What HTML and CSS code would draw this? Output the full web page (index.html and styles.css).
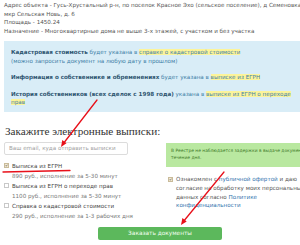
FILE: index.html
```html
<!DOCTYPE html>
<html lang="ru">
<head>
<meta charset="utf-8">
<link rel="stylesheet" href="styles.css">
</head>
<body>
<div class="page">
  <div class="info">
    <div class="line">Адрес объекта - Гусь-Хрустальный р-н, по поселок Красное Эхо (сельское поселение), д Семеновка</div>
    <div class="line">мкр Сельская Новь, д. 6</div>
    <div class="line">Площадь - 1450.24</div>
    <div class="line">Назначение - Многоквартирные дома не выше 3-х этажей, с участком и без участка</div>
  </div>

  <div class="callout">
    <p><b>Кадастровая стоимость</b> будет указана в <mark>справке о кадастровой стоимости</mark><br>(можно запросить документ на любую дату в прошлом)</p>
    <p><b>Информация о собственнике и обременениях</b> будет указана в <mark>выписке из ЕГРН</mark></p>
    <p><b>История собственников (всех сделок с 1998 года)</b> указана в <mark>выписке из ЕГРН о переходе</mark><br><mark>прав</mark></p>
  </div>

  <h2 class="title">Закажите электронные выписки:</h2>

  <div class="order">
    <div class="left">
      <div class="email">Ваш email, куда отправить выписки</div>
      <ul class="docs">
        <li class="doc"><span class="box checked"><svg viewBox="0 0 6 6" width="6" height="6"><path d="M1.2 3.1 L2.5 4.4 L4.9 1.4" fill="none" stroke="#333" stroke-width="1.1"/></svg></span>Выписка из ЕГРН</li>
        <li class="price">890 руб., исполнение за 5-30 минут</li>
        <li class="doc"><span class="box"></span>Выписка из ЕГРН о переходе прав</li>
        <li class="price">1100 руб., исполнение за 5-30 минут</li>
        <li class="doc"><span class="box"></span>Справка о кадастровой стоимости</li>
        <li class="price">290 руб., исполнение за 1-3 рабочих дня</li>
      </ul>
    </div>
    <div class="right">
      <div class="alert">В Реестре не наблюдается задержки в выдаче документов. Выписки готовятся в<br>течение дня.</div>
      <div class="consent">
        <span class="box checked"><svg viewBox="0 0 6 6" width="6" height="6"><path d="M1.2 3.1 L2.5 4.4 L4.9 1.4" fill="none" stroke="#333" stroke-width="1.1"/></svg></span>
        <div class="consent-text">Ознакомлен с <a href="#">публичной офертой</a> и даю<br>согласие на обработку моих персональных<br>данных согласно <a href="#">Политике</a><br><a href="#">конфиденциальности</a></div>
      </div>
    </div>
  </div>

  <div class="actions">
    <button class="submit">Заказать документы</button>
  </div>

  <svg class="marks" width="300" height="245" viewBox="0 0 300 245">
    <g stroke="#e8101a" stroke-width="1.3" fill="none" stroke-linecap="round">
      <line x1="97" y1="100" x2="63" y2="144"/>
      <line x1="3" y1="172" x2="70" y2="170.5"/>
      <line x1="224" y1="172" x2="183" y2="222"/>
    </g>
    <g fill="#e8101a">
      <polygon points="61,147 62.3,140 66.5,143.2"/>
      <polygon points="181,225 182.4,218 186.7,221.4"/>
    </g>
  </svg>
</div>
</body>
</html>
```

FILE: styles.css
```css
html, body {
  margin: 0;
  padding: 0;
  overflow: hidden;
  background: #fff;
}

.page {
  position: relative;
  width: 300px;
  height: 245px;
  overflow: hidden;
  font-family: "DejaVu Sans", Verdana, sans-serif;
  font-size: 5.6px;
  color: #555;
}

.info {
  padding: 1px 0 0 4px;
  line-height: 8.5px;
}

.line {
  white-space: nowrap;
}

.callout {
  margin: 5.5px 0 0 4px;
  width: 330px;
  background: #d9edf7;
  padding: 7.75px 0 5px 7px;
  color: #3d7ea6;
  line-height: 8.5px;
  white-space: nowrap;
}

.callout p {
  margin: 0 0 8px 0;
}

.callout p:last-child {
  margin-bottom: 0;
}

.callout b {
  color: #2e5570;
}

.callout mark {
  background: #fcf49a;
  color: #3d7ea6;
  padding: 0;
}

.title {
  margin: 13.5px 0 0 5px;
  font-family: "Liberation Serif", "Times New Roman", serif;
  font-weight: normal;
  font-size: 11.2px;
  line-height: 13px;
  color: #333;
  white-space: nowrap;
}

.order {
  display: grid;
  grid-template-columns: 124px 160px;
  column-gap: 38px;
  padding-left: 4px;
  margin-top: 3.5px;
}

.email {
  box-sizing: border-box;
  height: 13px;
  border: 1px solid #dcdcdc;
  border-radius: 2px;
  padding-left: 4px;
  line-height: 11px;
  color: #a0a0a0;
  white-space: nowrap;
}

.docs {
  list-style: none;
  margin: 6px 0 0 0;
  padding: 0;
  line-height: 10px;
  white-space: nowrap;
}

.doc {
  display: flex;
  align-items: center;
  color: #444;
}

.price {
  padding-left: 8px;
  color: #777;
}

.box {
  box-sizing: border-box;
  width: 5px;
  height: 5px;
  border: 0.6px solid #c8c8c8;
  background: #fff;
  margin-right: 3px;
  flex: none;
  display: flex;
  align-items: center;
  justify-content: center;
  overflow: visible;
}

.box.checked {
  background: #f4ead2;
  border-color: #c9bb9a;
}

.box svg {
  width: 5px;
  height: 5px;
}

.alert {
  margin-top: 1px;
  height: 24px;
  box-sizing: border-box;
  background: #b9e8a0;
  color: #3f7a2a;
  font-size: 4.4px;
  line-height: 7px;
  padding: 4.5px 0 0 5px;
  white-space: nowrap;
}

.consent {
  display: flex;
  align-items: flex-start;
  margin-top: 8.5px;
  padding-left: 2px;
  line-height: 8.7px;
  color: #555;
}

.consent .box {
  margin-top: 2px;
}

.consent-text {
  white-space: nowrap;
}

.consent a {
  color: #2f72ad;
  text-decoration: none;
}

.actions {
  display: flex;
  padding-left: 98px;
  margin-top: 6px;
}

.submit {
  width: 124px;
  height: 13px;
  border: 0;
  border-radius: 2px;
  background: #5cb85c;
  color: #f2fff0;
  font-family: "DejaVu Sans", Verdana, sans-serif;
  font-size: 5.8px;
  line-height: 13px;
  padding: 0;
}

.marks {
  position: absolute;
  left: 0;
  top: 0;
  pointer-events: none;
}
```
